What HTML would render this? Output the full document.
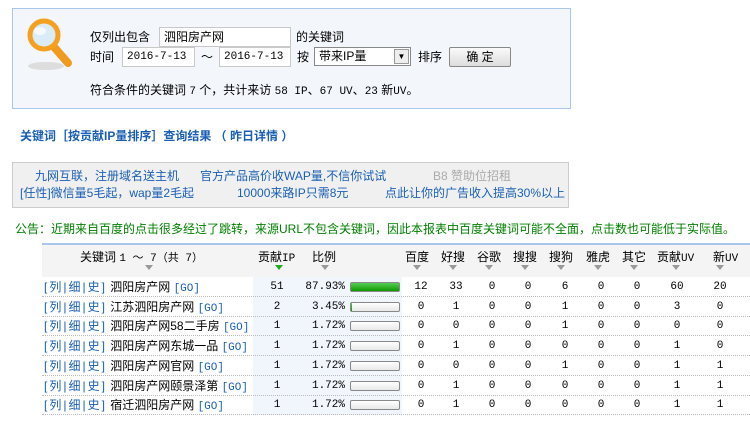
<!DOCTYPE html>
<html><head><meta charset="utf-8"><style>
*{margin:0;padding:0;box-sizing:border-box}
body{width:750px;height:429px;background:#fff;position:relative;overflow:hidden;font-family:"Liberation Sans","Noto Sans CJK SC",sans-serif;font-size:12px;color:#000}
.a{position:absolute;white-space:nowrap;line-height:14px}
.m{font-family:"Liberation Mono","Noto Sans CJK SC",monospace;font-size:11px}
.inp{position:absolute;border:1px solid #c8c8c8;background:#fff;height:20px;line-height:18px;padding-left:4px;white-space:nowrap}
.b{color:#1a5fb4}
.row{position:absolute;left:42px;width:708px;height:20px;border-bottom:1px dotted #bbb}
.bar{position:absolute;left:350px;width:50px;height:10px;border:1px solid #888;border-radius:2px;background:linear-gradient(#fff,#e8e8e8)}
.arr{position:absolute;top:265px;width:0;height:0;border-left:4px solid transparent;border-right:4px solid transparent;border-top:5px solid #999}
</style></head><body>
<div style="position:absolute;left:12px;top:8px;width:559px;height:101px;background:#f3f6fb;border:1px solid #a9c7ea"></div>
<svg style="position:absolute;left:22px;top:17px" width="60" height="60" viewBox="0 0 60 60">
<ellipse cx="24" cy="49" rx="18" ry="4" fill="#ddd"/>
<line x1="32" y1="30" x2="46" y2="46" stroke="#f09a1e" stroke-width="8" stroke-linecap="round"/>
<circle cx="22" cy="18" r="14" fill="#d9ecf7" stroke="#f4a020" stroke-width="5"/>
<ellipse cx="18" cy="14" rx="6" ry="4" fill="#fff" opacity=".7"/>
</svg>
<div class="a" style="left:90px;top:30px">仅列出包含</div>
<div class="inp" style="left:159px;top:27px;width:132px">泗阳房产网</div>
<div class="a" style="left:296px;top:30px">的关键词</div>
<div class="a" style="left:90px;top:50px">时间</div>
<div class="inp m" style="left:122px;top:47px;width:73px">2016-7-13</div>
<div class="a" style="left:201px;top:50px">～</div>
<div class="inp m" style="left:219px;top:47px;width:72px">2016-7-13</div>
<div class="a" style="left:297px;top:50px">按</div>
<div class="inp" style="left:314px;top:47px;width:97px;height:19px;border-color:#888;line-height:17px">带来IP量<span style="position:absolute;right:1px;top:1px;width:15px;height:15px;border:1px solid #999;background:#eee;font-size:8px;text-align:center;line-height:14px">▼</span></div>
<div class="a" style="left:418px;top:50px">排序</div>
<div style="position:absolute;left:449px;top:47px;width:62px;height:20px;border:1px solid #888;border-radius:2px;background:linear-gradient(#fafafa,#ddd);text-align:center;line-height:18px">确 定</div>
<div class="a" style="left:90px;top:83px">符合条件的关键词 <span class="m">7</span> 个，共计来访 <span class="m">58 IP</span>、<span class="m">67 UV</span>、<span class="m">23</span> 新<span class="m">UV</span>。</div>
<div class="a b" style="left:20px;top:129px;font-weight:bold;font-size:12px">关键词［按贡献IP量排序］查询结果 （ 昨日详情 ）</div>
<div style="position:absolute;left:12px;top:162px;width:557px;height:46px;background:#f0f0f0;border:1px solid #ccc"></div>
<div class="a b" style="left:35px;top:169px">九网互联，注册域名送主机</div>
<div class="a b" style="left:200px;top:169px">官方产品高价收WAP量,不信你试试</div>
<div class="a" style="left:433px;top:169px;color:#aaa">B8 赞助位招租</div>
<div class="a b" style="left:20px;top:186px">[任性]微信量5毛起，wap量2毛起</div>
<div class="a b" style="left:237px;top:186px">10000来路IP只需8元</div>
<div class="a b" style="left:385px;top:186px">点此让你的广告收入提高30%以上</div>
<div class="a" style="left:15px;top:222px;color:#008000">公告：近期来自百度的点击很多经过了跳转，来源URL不包含关键词，因此本报表中百度关键词可能不全面，点击数也可能低于实际值。</div>
<div style="position:absolute;left:42px;top:243px;width:708px;height:34px;background:#f4f4f4;border-top:2px solid #a9c7ea"></div>
<div style="position:absolute;left:253px;top:277px;width:149px;height:138px;background:#f1f6fc"></div>
<div class="a" style="left:80px;top:250px">关键词 <span class="m">1 ～ 7（共 7）</span></div>
<div class="a" style="left:258px;top:250px">贡献<span class="m">IP</span></div>
<div class="a" style="left:312px;top:250px">比例</div>
<div class="a" style="left:405px;top:250px">百度</div>
<div class="a" style="left:441px;top:250px">好搜</div>
<div class="a" style="left:477px;top:250px">谷歌</div>
<div class="a" style="left:513px;top:250px">搜搜</div>
<div class="a" style="left:549px;top:250px">搜狗</div>
<div class="a" style="left:586px;top:250px">雅虎</div>
<div class="a" style="left:622px;top:250px">其它</div>
<div class="a" style="left:657px;top:250px">贡献<span class="m">UV</span></div>
<div class="a" style="left:713px;top:250px">新<span class="m">UV</span></div>
<div class="arr" style="left:145px"></div><div class="arr" style="left:275px;border-top-color:#2a2"></div><div class="arr" style="left:321px"></div>
<div class="arr" style="left:413px"></div><div class="arr" style="left:449px"></div><div class="arr" style="left:485px"></div><div class="arr" style="left:521px"></div><div class="arr" style="left:557px"></div><div class="arr" style="left:594px"></div><div class="arr" style="left:630px"></div><div class="arr" style="left:672px"></div><div class="arr" style="left:716px"></div>
<div id="rows"></div>
<script>
var d=[["泗阳房产网",51,"87.93%",48,[12,33,0,0,6,0,0,60,20]],["江苏泗阳房产网",2,"3.45%",1,[0,1,0,0,1,0,0,3,0]],["泗阳房产网58二手房",1,"1.72%",0,[0,0,0,0,1,0,0,0,0]],["泗阳房产网东城一品",1,"1.72%",0,[0,1,0,0,0,0,0,1,0]],["泗阳房产网官网",1,"1.72%",0,[0,0,0,0,1,0,0,1,1]],["泗阳房产网颐景泽第",1,"1.72%",0,[0,1,0,0,0,0,0,1,1]],["宿迁泗阳房产网",1,"1.72%",0,[0,1,0,0,0,0,0,1,1]]];
var cx=[421,456,492,528,565,601,637,677,720],h="";
d.forEach(function(r,i){var t=277+i*19.7;
h+='<div class="row" style="top:'+t+'px"></div>';
h+='<div class="a" style="left:44px;top:'+(t+3)+'px"><span class="b" style="letter-spacing:2px">[列|细|史]</span> '+r[0]+' <span class="b m">[GO]</span></div>';
h+='<div class="a m" style="left:265px;width:24px;text-align:center;top:'+(t+3)+'px">'+r[1]+'</div>';
h+='<div class="a m" style="left:290px;width:55px;text-align:right;top:'+(t+3)+'px">'+r[2]+'</div>';
h+='<div class="bar" style="top:'+(t+5)+'px">'+(r[3]?'<div style="width:'+r[3]+'px;height:8px;background:linear-gradient(#5c5,#190)"></div>':'')+'</div>';
r[4].forEach(function(v,j){h+='<div class="a m" style="left:'+(cx[j]-12)+'px;width:24px;text-align:center;top:'+(t+3)+'px">'+v+'</div>';});
});
document.getElementById("rows").innerHTML=h;
</script>
</body></html>
